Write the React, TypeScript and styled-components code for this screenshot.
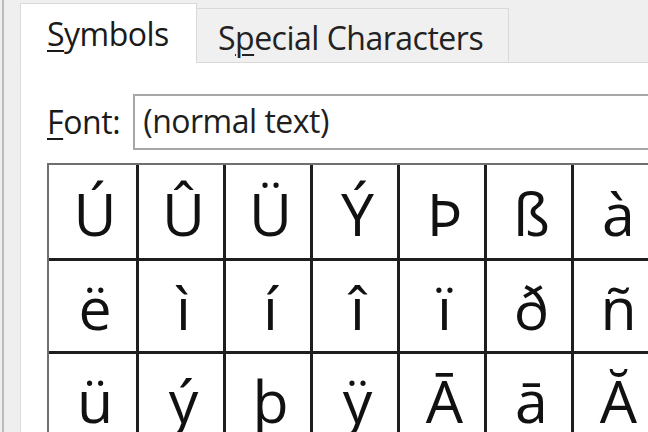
import React from "react";
import styled, { createGlobalStyle } from "styled-components";

const Global = createGlobalStyle`
  html, body { margin: 0; padding: 0; }
  body {
    width: 648px;
    height: 432px;
    overflow: hidden;
    background: #efefef;
    font-family: "Open Sans", "Noto Sans", "Liberation Sans", sans-serif;
    color: #1c1c1c;
  }
`;

const Page = styled.div`
  width: 648px;
  height: 432px;
  overflow: hidden;
  display: flex;
  background: #eeeeee;
`;

const Dialog = styled.div`
  margin-left: 2px;
  border-left: 2px solid #bcbcbc;
  padding-left: 16px;
  flex: 1;
  display: flex;
  flex-direction: column;
  background: #efefef;
  min-width: 0;
`;

const TabStrip = styled.div`
  flex-shrink: 0;
  height: 63px;
  box-sizing: border-box;
  display: flex;
  align-items: flex-end;
  border-bottom: 1px solid #d9d9d9;
`;

const Tab = styled.div<{ $active?: boolean }>`
  box-sizing: border-box;
  font-size: 32px;
  line-height: 44px;
  letter-spacing: -0.5px;
  white-space: nowrap;
  border: 1px solid #d9d9d9;
  border-bottom: none;
  ${(p) =>
    p.$active
      ? `
    width: 177px;
    height: 60px;
    margin-bottom: -1px;
    padding: 8px 0 0 26px;
    background: #ffffff;
    color: #1a1a1a;
  `
      : `
    width: 312px;
    height: 55px;
    border-left: none;
    border-bottom: 1px solid #d9d9d9;
    margin-bottom: -1px;
    padding: 7px 0 0 21px;
    background: #f0f0f0;
    color: #222222;
  `}
`;

const Key = styled.span`
  text-decoration: underline;
  text-decoration-thickness: 2px;
  text-underline-offset: 4px;
`;

const Panel = styled.div`
  flex: 1;
  background: #ffffff;
  border-left: 1px solid #dcdcdc;
  display: flex;
  flex-direction: column;
  min-width: 0;
  min-height: 0;
`;

const FontRow = styled.div`
  flex-shrink: 0;
  margin-top: 31px;
  padding-left: 26px;
  display: flex;
  align-items: center;
  gap: 13px;
`;

const Label = styled.div`
  font-size: 32px;
  line-height: 56px;
  letter-spacing: -0.4px;
  white-space: nowrap;
  color: #1a1a1a;
`;

const FontBox = styled.div`
  flex: 1;
  height: 56px;
  box-sizing: border-box;
  border: 2px solid #a7a7a7;
  border-right: none;
  padding-left: 8px;
  font-size: 32px;
  line-height: 50px;
  letter-spacing: -0.5px;
  white-space: nowrap;
  color: #1e1e1e;
`;

const Grid = styled.div`
  flex-shrink: 0;
  margin-top: 13px;
  margin-left: 26px;
  display: grid;
  grid-template-columns: 90px repeat(6, 87px);
  grid-template-rows: 96px 93px 93px;
  border-top: 2px solid #6f6f6f;
  border-left: 2px solid #6f6f6f;
  width: max-content;
`;

const Cell = styled.div`
  box-sizing: border-box;
  border-right: 3px solid #1e1e1e;
  border-bottom: 3px solid #1e1e1e;
  display: flex;
  align-items: center;
  justify-content: center;
  padding: 3px 0 0 5px;
  font-family: "Open Sans", "Noto Sans", "DejaVu Sans", sans-serif;
  font-size: 59px;
  line-height: 59px;
  color: #111111;
  background: #ffffff;
`;

const rows = [
  ["Ú", "Û", "Ü", "Ý", "Þ", "ß", "à"],
  ["ë", "ì", "í", "î", "ï", "ð", "ñ"],
  ["ü", "ý", "þ", "ÿ", "Ā", "ā", "Ă"],
];

export default function App() {
  return (
    <>
      <Global />
      <Page>
        <Dialog>
          <TabStrip>
            <Tab $active>
              <Key>S</Key>ymbols
            </Tab>
            <Tab>
              S<Key>p</Key>ecial Characters
            </Tab>
          </TabStrip>
          <Panel>
            <FontRow>
              <Label>
                <Key>F</Key>ont:
              </Label>
              <FontBox>(normal text)</FontBox>
            </FontRow>
            <Grid>
              {rows.flat().map((ch, i) => (
                <Cell key={i}>{ch}</Cell>
              ))}
            </Grid>
          </Panel>
        </Dialog>
      </Page>
    </>
  );
}
